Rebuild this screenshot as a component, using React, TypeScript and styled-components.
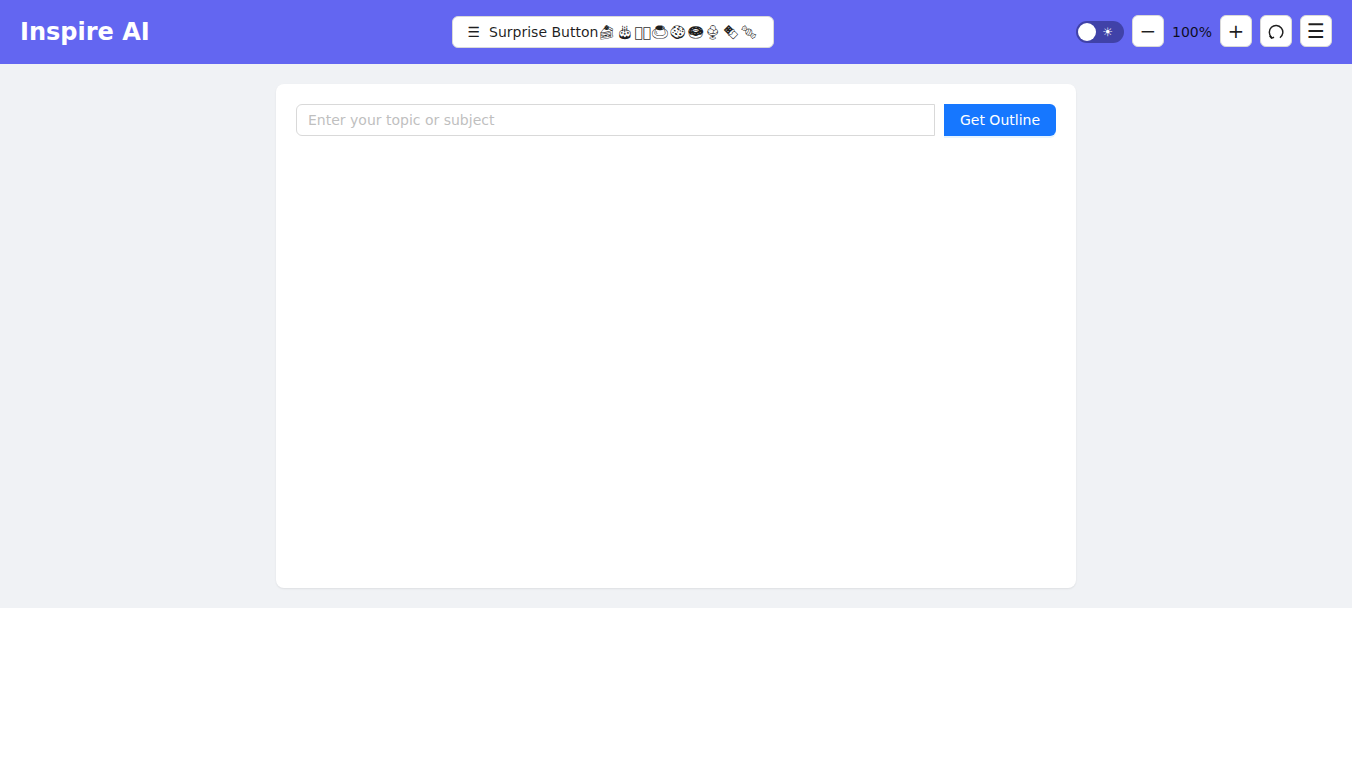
import React from 'react';
import styled, { createGlobalStyle } from 'styled-components';

const Global = createGlobalStyle`
  html, body { margin: 0; padding: 0; background: #fff; }
  * { box-sizing: border-box; }
  body { font-family: "DejaVu Sans", sans-serif; }
`;
const Page = styled.div`background: #f0f2f5; height: 608px; display: flex; flex-direction: column;`;
const Header = styled.header`height: 64px; background: #6366f1; padding: 0 20px; display: flex; justify-content: space-between; align-items: center;`;
const Logo = styled.h1`margin: 0; font-size: 24px; font-weight: 700; color: #fff;`;
const Surprise = styled.button`height: 32px; width: 322px; background: #fff; border: 1px solid #d9d9d9; border-radius: 6px; display: flex; align-items: center; justify-content: center; gap: 9px; padding: 0 15px; font: 14px "DejaVu Sans", sans-serif; font-variant-emoji: text; color: rgba(0,0,0,.88); white-space: nowrap;`;
const Sweets = styled.span`letter-spacing: -.1px;`;
const Controls = styled.div`display: flex; align-items: center; justify-content: flex-end; gap: 8px; margin-top: -2px;`;
const Toggle = styled.div`width: 48px; height: 22px; margin-top: 2px; border-radius: 11px; background: #4042a8; position: relative; color: #fff; font-size: 12px; display: flex; align-items: center; justify-content: flex-end; padding-right: 11px;`;
const Knob = styled.span`position: absolute; left: 2px; top: 2px; width: 18px; height: 18px; border-radius: 50%; background: #fff;`;
const IconBtn = styled.button`width: 32px; height: 32px; background: #fff; border: 1px solid #d9d9d9; border-radius: 6px; display: flex; align-items: center; justify-content: center; padding: 0; font: 20px "DejaVu Sans", sans-serif; color: rgba(0,0,0,.88);`;
const Zoom = styled.span`font-size: 14px; margin-top: 2px; color: rgba(0,0,0,.88);`;
const Main = styled.main`flex: 1; padding: 20px; display: flex; justify-content: center;`;
const Card = styled.section`width: 800px; background: #fff; border-radius: 8px; padding: 20px; box-shadow: 0 1px 2px rgba(0,0,0,.08);`;
const Row = styled.div`display: flex; gap: 9px;`;
const Input = styled.input`flex: 1; min-width: 0; height: 32px; border: 1px solid #d9d9d9; border-radius: 6px 0 0 6px; padding: 0 11px; font: 14px "DejaVu Sans", sans-serif; &::placeholder { color: #bfbfbf; opacity: 1; }`;
const Primary = styled.button`width: 112px; height: 32px; background: #1677ff; color: #fff; border: 0; border-radius: 0 6px 6px 0; box-shadow: 0 2px 0 rgba(5,145,255,.1); font: 14px "DejaVu Sans", sans-serif;`;
const Reset = () => (
  <svg width="18" height="18" viewBox="0 0 16 16" fill="none" stroke="currentColor" strokeWidth="1.300"><path d="M11.500 14A6 6 0 1 0 4 13.500" /><path d="M2.300 12.300 4 14.300 6.300 13.500" /></svg>
);

export default function App() {
  return (
    <Page>
      <Global />
      <Header>
        <Logo>Inspire AI</Logo>
        <Surprise><span>☰</span><span>Surprise Button<Sweets>🍰🎂{'\uE000\uE000'}🍮🍪🍩🍨🍫🍬</Sweets></span></Surprise>
        <Controls>
          <Toggle>☀<Knob /></Toggle>
          <IconBtn aria-label="zoom out">−</IconBtn>
          <Zoom>100%</Zoom>
          <IconBtn aria-label="zoom in">+</IconBtn>
          <IconBtn aria-label="reset"><Reset /></IconBtn>
          <IconBtn aria-label="menu">☰</IconBtn>
        </Controls>
      </Header>
      <Main>
        <Card>
          <Row>
            <Input placeholder="Enter your topic or subject" />
            <Primary>Get Outline</Primary>
          </Row>
        </Card>
      </Main>
    </Page>
  );
}
